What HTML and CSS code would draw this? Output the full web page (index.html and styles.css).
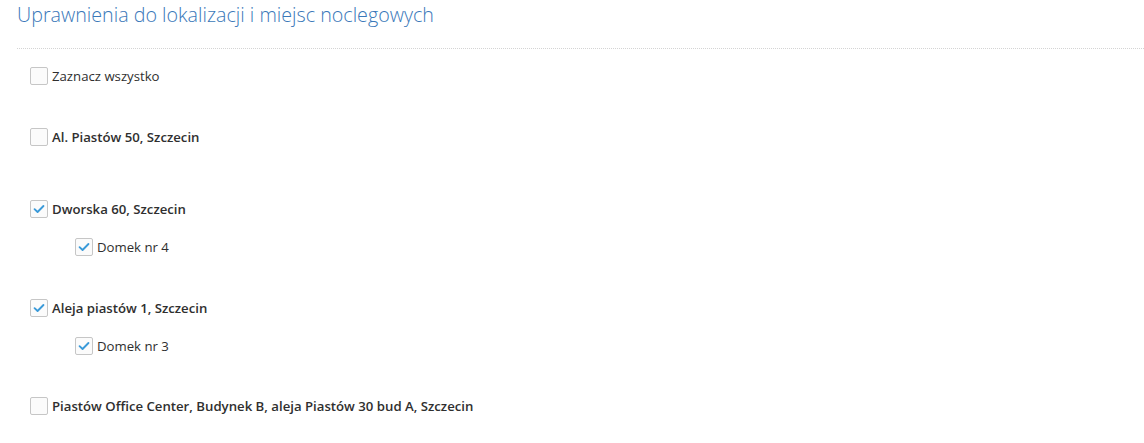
FILE: index.html
```html
<!DOCTYPE html>
<html lang="pl">
<head>
<meta charset="utf-8">
<title>Uprawnienia</title>
<link rel="stylesheet" href="styles.css">
</head>
<body>
<div class="page">
  <div class="header">
    <h1 class="title">Uprawnienia do lokalizacji i miejsc noclegowych</h1>
  </div>
  <div class="list">
    <div class="row row-all"><span class="box"></span><span class="label">Zaznacz wszystko</span></div>

    <div class="group group-empty">
      <div class="row"><span class="box"></span><span class="label strong">Al. Piastów 50, Szczecin</span></div>
    </div>

    <div class="group">
      <div class="row"><span class="box checked"><svg viewBox="0 0 18 18" class="tick"><path d="M4 9.2 L7.4 12.4 L14 5.6"/></svg></span><span class="label strong">Dworska 60, Szczecin</span></div>
      <div class="row child"><span class="box checked"><svg viewBox="0 0 18 18" class="tick"><path d="M4 9.2 L7.4 12.4 L14 5.6"/></svg></span><span class="label">Domek nr 4</span></div>
    </div>

    <div class="group">
      <div class="row"><span class="box checked"><svg viewBox="0 0 18 18" class="tick"><path d="M4 9.2 L7.4 12.4 L14 5.6"/></svg></span><span class="label strong">Aleja piastów 1, Szczecin</span></div>
      <div class="row child"><span class="box checked"><svg viewBox="0 0 18 18" class="tick"><path d="M4 9.2 L7.4 12.4 L14 5.6"/></svg></span><span class="label">Domek nr 3</span></div>
    </div>

    <div class="group group-last">
      <div class="row"><span class="box"></span><span class="label strong">Piastów Office Center, Budynek B, aleja Piastów 30 bud A, Szczecin</span></div>
    </div>
  </div>
</div>
</body>
</html>
```
FILE: styles.css
```css
html, body {
  margin: 0;
  padding: 0;
  background: #ffffff;
}
body {
  font-family: "Open Sans", "Noto Sans", sans-serif;
  color: #333333;
}
.page {
  padding-left: 17px;
}
.header {
  padding-bottom: 18px;
  border-bottom: 1px dotted #d4d4d4;
}
.title {
  margin: 0;
  padding-left: 0;
  font-size: 19.7px;
  line-height: 30px;
  font-weight: 300;
  color: #3a78b9;
}
.list {
  padding-left: 13px;
  padding-top: 17px;
}
.row {
  display: flex;
  align-items: center;
  height: 20px;
}
.group {
  margin-top: 41px;
}
.group-empty {
  padding-bottom: 11px;
}
.group-last {
  margin-top: 40px;
}
.child {
  margin-top: 18px;
  padding-left: 45px;
}
.box {
  box-sizing: border-box;
  width: 18px;
  height: 18px;
  border: 1px solid #c6c6c6;
  border-radius: 2px;
  background: #fbfbfb;
  flex: none;
  display: flex;
}
.tick {
  width: 16px;
  height: 16px;
}
.tick path {
  fill: none;
  stroke: #3a9ad9;
  stroke-width: 2.1;
  stroke-linecap: round;
  stroke-linejoin: round;
}
.label {
  margin-left: 4px;
  font-size: 13.2px;
  line-height: 20px;
  color: #2f2f2f;
}
.strong {
  font-weight: 600;
}
```
